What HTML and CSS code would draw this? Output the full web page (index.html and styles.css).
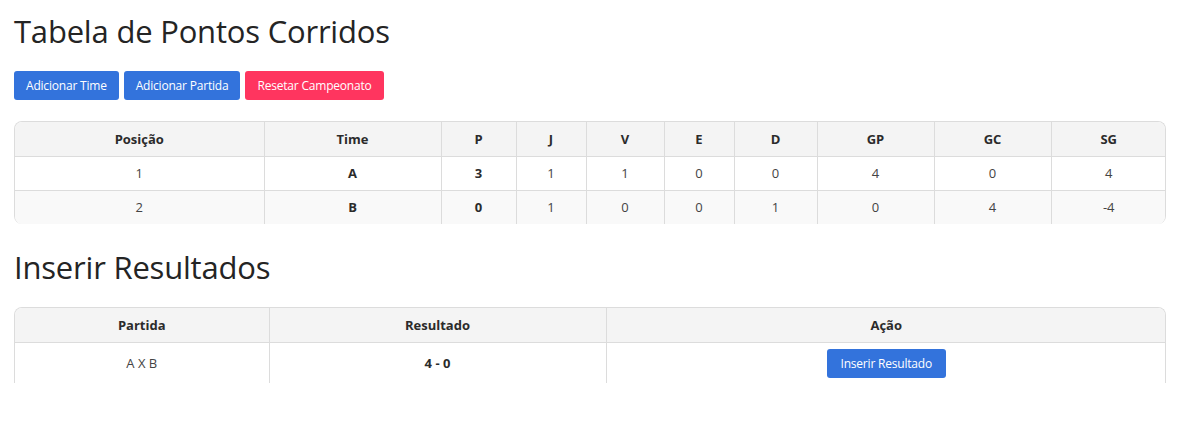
FILE: index.html
```html
<!DOCTYPE html>
<html lang="pt-BR">
<head>
<meta charset="utf-8">
<title>Tabela de Pontos Corridos</title>
<link rel="stylesheet" href="styles.css">
</head>
<body>
<main class="page">
  <h1 class="title">Tabela de Pontos Corridos</h1>
  <div class="actions">
    <button class="btn btn-blue">Adicionar Time</button>
    <button class="btn btn-blue">Adicionar Partida</button>
    <button class="btn btn-red">Resetar Campeonato</button>
  </div>
  <div class="table-wrap">
    <table class="grid standings">
      <colgroup>
        <col class="c-pos"><col class="c-time"><col class="c-p"><col class="c-j"><col class="c-v"><col class="c-e"><col class="c-d"><col class="c-gp"><col class="c-gc"><col class="c-sg">
      </colgroup>
      <thead>
        <tr><th>Posição</th><th>Time</th><th>P</th><th>J</th><th>V</th><th>E</th><th>D</th><th>GP</th><th>GC</th><th>SG</th></tr>
      </thead>
      <tbody>
        <tr><td>1</td><td class="b">A</td><td class="b">3</td><td>1</td><td>1</td><td>0</td><td>0</td><td>4</td><td>0</td><td>4</td></tr>
        <tr class="alt"><td>2</td><td class="b">B</td><td class="b">0</td><td>1</td><td>0</td><td>0</td><td>1</td><td>0</td><td>4</td><td>-4</td></tr>
      </tbody>
    </table>
  </div>
  <h2 class="title title-2">Inserir Resultados</h2>
  <div class="clip">
    <div class="table-wrap table-wrap-flush">
      <table class="grid results">
        <colgroup><col class="c-partida"><col class="c-res"><col class="c-acao"></colgroup>
        <thead><tr><th>Partida</th><th>Resultado</th><th>Ação</th></tr></thead>
        <tbody>
          <tr><td>A X B</td><td class="b">4 - 0</td><td><button class="btn btn-blue">Inserir Resultado</button></td></tr>
        </tbody>
      </table>
    </div>
  </div>
</main>
</body>
</html>
```
FILE: styles.css
```css
* { box-sizing: border-box; }
html, body { margin: 0; background: #fff; }
body {
  font-family: "Open Sans", "Noto Sans", sans-serif;
  color: #333;
}
.page { padding: 0 19px 0 14px; }
.title {
  margin: 0;
  padding-top: 11px;
  height: 59px;
  font-size: 31px;
  font-weight: 500;
  letter-spacing: -0.2px;
  line-height: 40px;
  color: #242424;
}
.actions {
  display: flex;
  gap: 5px;
  margin-top: 12px;
}
.btn {
  font-family: inherit;
  font-size: 12px;
  letter-spacing: -0.2px;
  color: #fff;
  border: 0;
  border-radius: 3px;
  height: 29px;
  padding: 0 12px;
  cursor: pointer;
}
.btn-blue { background: #3373dc; }
.btn-red { background: #ff355f; }
.table-wrap {
  margin-top: 21px;
  border: 1px solid #dcdcdc;
  border-bottom: 0;
  border-radius: 8px;
  overflow: hidden;
}
.grid {
  width: 100%;
  border-collapse: collapse;
  table-layout: fixed;
  font-size: 13px;
}
.grid th, .grid td {
  height: 34px;
  padding: 0 8px;
  text-align: center;
  border-right: 1px solid #dcdcdc;
  border-bottom: 1px solid #dcdcdc;
}
.grid th:last-child, .grid td:last-child { border-right: 0; }
.grid tbody tr:last-child td { border-bottom: 0; }
.grid th { background: #f4f4f4; font-weight: 700; color: #2b2b2b; }
.grid td { color: #444; }
.grid td.b { font-weight: 700; color: #2b2b2b; }
.grid .alt td { background: #f9f9f9; }
.c-pos { width: 249px; } .c-time { width: 177px; } .c-p { width: 75px; }
.c-j { width: 70px; } .c-v { width: 78px; } .c-e { width: 70px; }
.c-d { width: 83px; } .c-gp { width: 117px; } .c-gc { width: 117px; } .c-sg { width: 115px; }
.title-2 { margin-top: 13px; padding-top: 10px; height: 62px; }
.c-partida { width: 254px; } .c-res { width: 337px; } .c-acao { width: 560px; }
.results td { height: 50px; padding-bottom: 8px; }
.results .btn { padding: 0 14px; }
.clip { height: 76px; margin-top: 8px; overflow: hidden; }
.table-wrap-flush { margin-top: 0; }
```
